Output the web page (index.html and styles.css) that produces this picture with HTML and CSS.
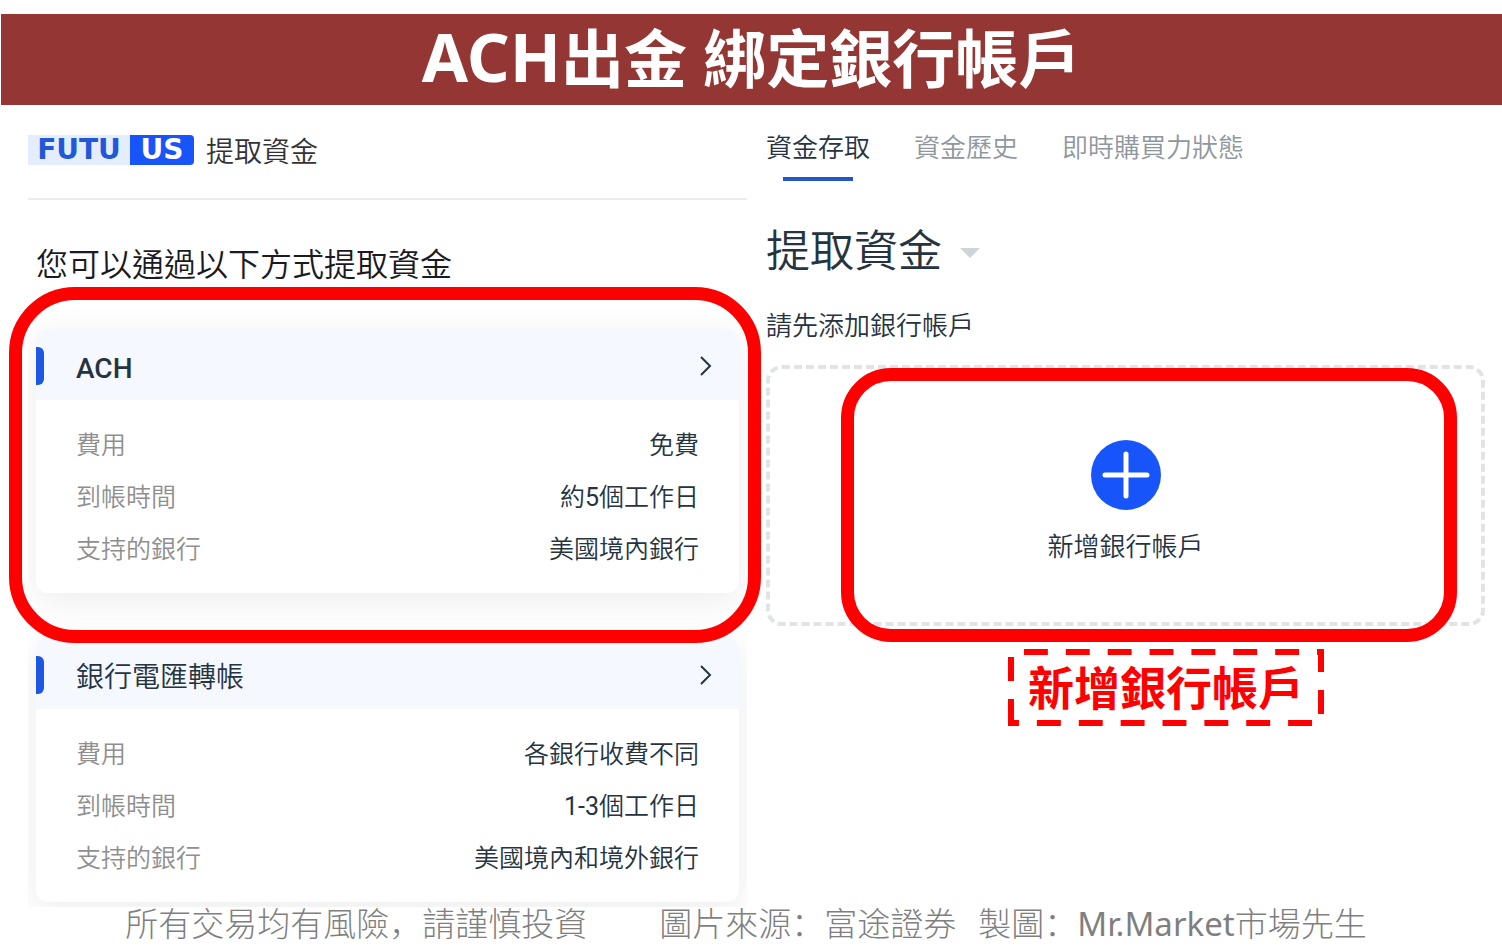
FILE: index.html
```html
<!DOCTYPE html>
<html lang="zh-Hant">
<head>
    <meta charset="UTF-8">
    <meta name="viewport" content="width=device-width, initial-scale=1.0">
    <title>ACH出金 綁定銀行帳戶</title>
    <link rel="stylesheet" href="styles.css">
</head>
<body>
    <h1 class="banner"><span class="banner-latin">ACH</span>出金 綁定銀行帳戶</h1>

    <main class="content">
        <section class="withdraw">
            <header class="brand">
                <span class="logo"><span class="logo-futu">FUTU</span><span class="logo-us">US</span></span>
                <span>提取資金</span>
            </header>
            <h2 class="withdraw-title">您可以通過以下方式提取資金</h2>

            <div class="methods">
                <div class="method-list">
                    <article class="method">
                        <a class="method-head" href="#ach">
                            <span class="method-name"><span class="latin">ACH</span></span>
                            <svg class="chevron" viewBox="0 0 12 20"><path d="M1 1l9 9-9 9"/></svg>
                        </a>
                        <dl class="method-info">
                            <div><dt>費用</dt><dd>免費</dd></div>
                            <div><dt>到帳時間</dt><dd>約<span class="digits">5</span>個工作日</dd></div>
                            <div><dt>支持的銀行</dt><dd>美國境內銀行</dd></div>
                        </dl>
                    </article>
                    <article class="method">
                        <a class="method-head" href="#wire">
                            <span class="method-name">銀行電匯轉帳</span>
                            <svg class="chevron" viewBox="0 0 12 20"><path d="M1 1l9 9-9 9"/></svg>
                        </a>
                        <dl class="method-info">
                            <div><dt>費用</dt><dd>各銀行收費不同</dd></div>
                            <div><dt>到帳時間</dt><dd><span class="digits">1-3</span>個工作日</dd></div>
                            <div><dt>支持的銀行</dt><dd>美國境內和境外銀行</dd></div>
                        </dl>
                    </article>
                </div>
                <div class="highlight highlight-ach"></div>
            </div>
        </section>

        <section class="account">
            <nav class="tabs">
                <a class="tab active" href="#transfer">資金存取</a>
                <a class="tab" href="#history">資金歷史</a>
                <a class="tab" href="#power">即時購買力狀態</a>
            </nav>
            <button class="type-select" type="button">
                提取資金
                <svg class="caret" viewBox="0 0 20 10"><path d="M0 0h20L10 10z"/></svg>
            </button>
            <p class="hint">請先添加銀行帳戶</p>
            <div class="add-area">
                <button class="add-bank" type="button">
                    <svg class="plus" viewBox="0 0 70 70">
                        <circle cx="35" cy="35" r="35"/>
                        <path d="M35 14v42M14 35h42"/>
                    </svg>
                    新增銀行帳戶
                </button>
                <div class="highlight highlight-add"></div>
            </div>
            <div class="note">
                <svg class="note-border" viewBox="0 0 317 77" preserveAspectRatio="none"><path d="M3 74V3h311v71z"/></svg>
                新增銀行帳戶
            </div>
        </section>
    </main>

    <footer class="footer" lang="zh-Hans">
        <span class="risk">所有交易均有風險，請謹慎投資</span>
        <span>圖片來源：富途證券</span>
        <span>製圖：<span class="author">Mr.Market</span>市場先生</span>
    </footer>
</body>
</html>
```
FILE: styles.css
```css
* {
    box-sizing: border-box;
}
body {
    margin: 0;
    background-color: #fff;
    font-family: "Noto Sans CJK TC", sans-serif;
    font-weight: 350;
    color: #26343f;
}
h1, h2, p, dl, dd {
    margin: 0;
}
a {
    color: inherit;
    text-decoration: none;
}
button {
    border: 0;
    padding: 0;
    background: none;
    font: inherit;
    color: inherit;
    cursor: pointer;
}
.banner {
    margin: 14px 0 0 1px;
    padding-bottom: 4px;
    background-color: #943634;
    color: #fff;
    font-family: "Noto Sans", "Noto Sans CJK TC", sans-serif;
    font-size: 63px;
    font-weight: 700;
    line-height: 87px;
    text-align: center;
}
.banner-latin {
    font-size: 67px;
    line-height: 1;
}
.content {
    display: grid;
    grid-template-columns: 1fr 1fr;
    gap: 19px;
    padding: 0 17px 0 28px;
}

/* left screen */
.brand {
    display: flex;
    align-items: center;
    gap: 12px;
    padding: 24px 0 27px;
    border-bottom: 2px solid #ededef;
    font-size: 28px;
    line-height: 42px;
    color: #333;
}
.logo {
    display: flex;
    font-family: "DejaVu Sans", sans-serif;
    font-size: 28px;
    font-weight: 700;
    line-height: 30px;
    text-align: center;
}
.logo-futu {
    width: 102px;
    background-color: #e3edfc;
    color: #2257d8;
}
.logo-us {
    width: 64px;
    border-radius: 0 4px 4px 0;
    background-color: #1755fb;
    color: #fff;
}
.withdraw-title {
    padding: 38px 8px 14px;
    font-size: 32px;
    font-weight: 350;
    line-height: 48px;
    color: #1a1a24;
}
.methods {
    position: relative;
}
.method-list {
    display: flex;
    flex-direction: column;
    gap: 45px;
    padding: 29px 8px 5px;
    overflow: hidden;
}
.method {
    border-radius: 12px;
    background-color: #fff;
    box-shadow: 0 8px 36px rgba(0, 0, 0, 0.08);
}
.method-head {
    display: flex;
    align-items: center;
    height: 71px;
    padding: 2px 27px 0 0;
    border-radius: 12px 12px 0 0;
    background-color: #f5f8ff;
    font-size: 28px;
}
.method-head::before {
    content: "";
    width: 8px;
    height: 38px;
    margin-right: 32px;
    border-radius: 0 6px 6px 0;
    background-color: #1d57e5;
}
.method-name {
    flex: 1;
}
.latin {
    font-family: Roboto, sans-serif;
    font-weight: 500;
}
.chevron {
    width: 12px;
    height: 20px;
    fill: none;
    stroke: #26343f;
    stroke-width: 2;
}
.method-info {
    padding: 20px 40px 17px;
    font-family: Roboto, "Noto Sans CJK TC", sans-serif;
    font-size: 25px;
    line-height: 52px;
}
.method-info div {
    display: flex;
    justify-content: space-between;
}
.method-info dt {
    color: #8f8f8f;
}
.digits {
    font-weight: 400;
}

/* red marker frames */
.highlight {
    position: absolute;
    border: 13px solid #f00;
    pointer-events: none;
}
.highlight-ach {
    inset: -13px -14px 264px -19px;
    border-radius: 66px;
}
.highlight-add {
    inset: -1px 24px -20px 71px;
    border-radius: 50px;
}

/* right screen */
.account {
    padding-top: 23px;
}
.tabs {
    display: flex;
    gap: 44px;
    font-size: 26px;
    line-height: 36px;
    color: #8e979e;
}
.tab::after {
    content: "";
    display: block;
    width: 70px;
    height: 4px;
    margin: 13px auto 0;
}
.tab.active {
    color: #26343f;
}
.tab.active::after {
    background-color: #2257c4;
}
.type-select {
    display: flex;
    align-items: center;
    gap: 18px;
    margin-top: 37px;
    font-size: 44px;
    line-height: 60px;
}
.caret {
    width: 20px;
    height: 10px;
    margin-top: 10px;
    fill: #cfd4d8;
}
.hint {
    margin: 28px 0 23px;
    font-size: 26px;
    line-height: 36px;
}
.add-area {
    position: relative;
    border: 4px dashed #e0e4e6;
    border-radius: 16px;
}
.add-bank {
    display: flex;
    flex-direction: column;
    align-items: center;
    gap: 17px;
    width: 100%;
    padding: 71px 0 59px;
    font-size: 26px;
    line-height: 36px;
}
.plus {
    width: 70px;
    height: 70px;
    fill: #1755fb;
    stroke-linecap: round;
}
.plus path {
    stroke: #fff;
    stroke-width: 5;
}
.note {
    position: relative;
    width: fit-content;
    margin: 23px 0 0 242px;
    padding: 0 20px 4px;
    font-size: 46px;
    font-weight: 700;
    line-height: 73px;
    color: #f00;
}
.note-border {
    position: absolute;
    inset: 0;
    width: 100%;
    height: 100%;
    fill: none;
    stroke: #f00;
    stroke-width: 6;
    stroke-dasharray: 24 18;
}

.footer {
    display: flex;
    justify-content: center;
    gap: 22px;
    padding-right: 10px;
    font-family: "Noto Sans", "Noto Sans CJK SC", sans-serif;
    font-size: 33px;
    font-weight: 300;
    line-height: 33px;
    color: #7f7f7f;
}
.risk {
    margin-right: 50px;
}
.author {
    font-weight: 400;
}
```
